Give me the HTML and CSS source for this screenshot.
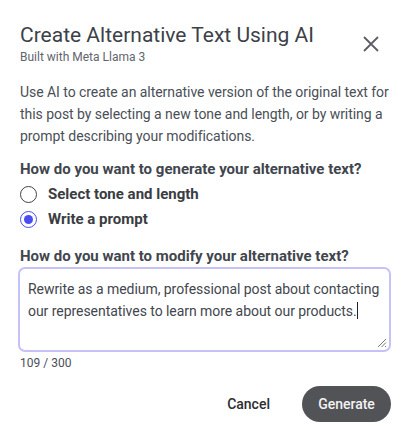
FILE: index.html
```html
<!DOCTYPE html>
<html lang="en-US">
<head>
<meta charset="utf-8">
<link rel="stylesheet" href="styles.css">
</head>
<body>
<div class="dialog">
  <div class="head">
    <div>
      <h1 class="title">Create Alternative Text Using AI</h1>
      <div class="sub">Built with Meta Llama 3</div>
    </div>
    <button class="close" aria-label="Close">
      <svg width="18" height="18" viewBox="0 0 18 18"><path d="M2 2 L16 16 M16 2 L2 16" stroke="#5c5f63" stroke-width="1.8" fill="none"/></svg>
    </button>
  </div>

  <p class="intro">Use AI to create an alternative version of the original text for this post by selecting a new tone and length, or by writing a prompt describing your modifications.</p>

  <div class="question">How do you want to generate your alternative text?</div>
  <label class="option"><span class="radio"></span>Select tone and length</label>
  <label class="option"><span class="radio on"></span>Write a prompt</label>

  <div class="question second">How do you want to modify your alternative text?</div>
  <div class="box">Rewrite as a medium, professional post about contacting our representatives to learn more about our products.<span class="caret"></span>
    <svg class="grip" width="10" height="10" viewBox="0 0 10 10"><path d="M9 1 L1 9 M9 4.5 L4.5 9 M9 8 L8 9" stroke="#777" stroke-width="1"/></svg>
  </div>
  <div class="count">109 / 300</div>

  <div class="actions">
    <button class="cancel">Cancel</button>
    <button class="generate">Generate</button>
  </div>
</div>
</body>
</html>
```

FILE: styles.css
```css
body {
    margin: 0;
    background-color: #ffffff;
    font-family: Roboto, "Liberation Sans", Arial, sans-serif;
    color: #41464d;
}
.dialog {
    padding: 22px 20px 0 20px;
}
.head {
    display: flex;
    justify-content: space-between;
    align-items: flex-start;
}
.title {
    margin: 0;
    font-size: 21px;
    font-weight: 400;
    line-height: 26px;
    color: #3c4148;
}
.sub {
    font-size: 12px;
    line-height: 16px;
    color: #5f656d;
    margin-top: 1px;
}
.close {
    border: none;
    background: none;
    padding: 0;
    margin: 13px 14px 0 0;
    width: 18px;
    height: 18px;
    display: flex;
}
.intro {
    margin: 16px 0 0 0;
    font-size: 14px;
    letter-spacing: -0.05px;
    line-height: 22px;
    color: #4a4f56;
}
.question {
    margin-top: 12px;
    font-size: 15px;
    font-weight: 700;
    line-height: 20px;
    color: #41464d;
}
.question.second {
    margin-top: 15px;
}
.option {
    display: flex;
    align-items: center;
    gap: 11px;
    font-size: 15px;
    font-weight: 700;
    line-height: 24px;
    color: #3a3d42;
    margin-top: 1px;
}
.question + .option {
    margin-top: 3px;
}
.radio {
    width: 15px;
    height: 15px;
    border: 1.5px solid #3f4247;
    border-radius: 50%;
    display: inline-block;
    position: relative;
}
.radio.on {
    border-color: #4c4cf3;
}
.radio.on::after {
    content: "";
    position: absolute;
    left: 3px;
    top: 3px;
    width: 9px;
    height: 9px;
    border-radius: 50%;
    background-color: #4c4cf3;
}
.box {
    margin: 1px 3px 0 -2px;
    border: 2px solid #c6c1f6;
    border-radius: 7px;
    height: 65px;
    padding: 9px 3px 7px 8px;
    font-size: 14px;
    letter-spacing: -0.05px;
    line-height: 22px;
    color: #42464d;
    position: relative;
}
.caret {
    display: inline-block;
    width: 1px;
    height: 17px;
    background: #222;
    vertical-align: -3px;
}
.grip {
    position: absolute;
    right: 2px;
    bottom: 2px;
}
.count {
    font-size: 12px;
    line-height: 16px;
    color: #4a4f56;
    margin-top: 3px;
}
.actions {
    display: flex;
    justify-content: flex-end;
    align-items: center;
    gap: 32px;
    margin: 15px 3px 0 0;
}
.cancel {
    border: none;
    background: none;
    font-family: inherit;
    font-size: 14px;
    font-weight: 500;
    color: #2b2d31;
    padding: 0;
}
.generate {
    border: none;
    background-color: #525357;
    color: #f2f2f2;
    font-family: inherit;
    font-size: 14px;
    font-weight: 500;
    height: 36px;
    padding: 0 16px;
    border-radius: 18px;
    width: 89px;
}
```
